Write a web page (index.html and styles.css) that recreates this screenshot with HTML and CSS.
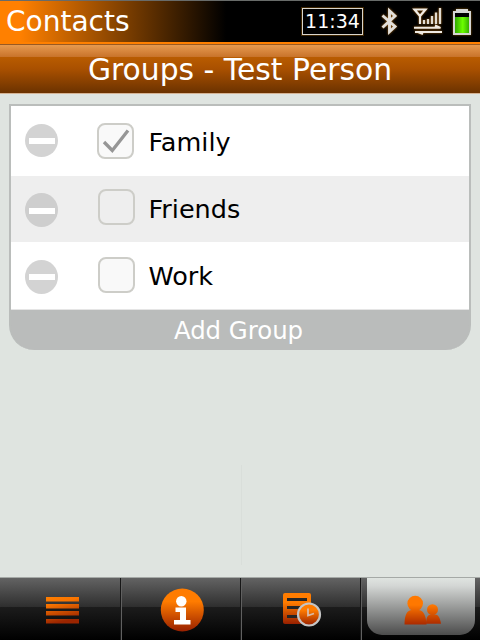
FILE: index.html
```html
<!DOCTYPE html>
<html lang="en">
<head>
<meta charset="utf-8">
<title>Contacts</title>
<link rel="stylesheet" href="styles.css">
</head>
<body>
<svg class="defs" width="0" height="0" aria-hidden="true">
  <defs>
    <linearGradient id="orange" x1="0" y1="0" x2="0" y2="1"><stop offset="0.3" stop-color="#ff7c00"/><stop offset="1" stop-color="#982000"/></linearGradient>
    <linearGradient id="people" gradientUnits="userSpaceOnUse" x1="0" y1="10" x2="0" y2="30"><stop offset="0" stop-color="#ff7800"/><stop offset="1" stop-color="#a82800"/></linearGradient>
    <linearGradient id="bars" gradientUnits="userSpaceOnUse" x1="0" y1="5" x2="6" y2="32"><stop offset="0" stop-color="#ff7e00"/><stop offset="0.3" stop-color="#f87400"/><stop offset="1" stop-color="#9b2500"/></linearGradient>
    <linearGradient id="battery" x1="0" x2="1"><stop offset="0" stop-color="#32a800"/><stop offset="0.55" stop-color="#6cff00"/><stop offset="1" stop-color="#36b000"/></linearGradient>
  </defs>
</svg>
<header class="status">
  <h1 class="app-name">Contacts</h1>
  <div class="clock">11:34</div>
  <svg class="bluetooth" width="20" height="30" viewBox="0 0 20 30"><path d="M2.500 8.500 L15 19.500 L9.500 24.700 V3.800 L15 9 L2.500 20.500" fill="none" stroke="#e2dfda" stroke-width="2.900"/></svg>
  <svg class="signal" width="32" height="30" viewBox="0 0 32 30"><path d="M2.500 3.500 H13.500 L8 10 Z M8 9 V18" fill="none" stroke="#f0ece6" stroke-width="2.200"/><path d="M12 18V14M16 18V13M20 18V10M24 18V6.500M28 18V2" stroke="#e2dcd2" stroke-width="2.300"/><path d="M2 21.800H28.500L23 19.500M30 26H3M6 26L11 28" fill="none" stroke="#eee9e2" stroke-width="2"/></svg>
  <svg class="battery" width="20" height="28" viewBox="0 0 20 28"><path d="M4 1H16V3H19V27H1V3H4Z" fill="#d5d5d3"/><path d="M3 5H17V25H3Z" fill="#000"/><path d="M3 9H17V25H3Z" fill="url(#battery)"/></svg>
</header>
<div class="title">Groups - Test Person</div>
<main class="content">
  <section class="list">
    <div class="row">
      <span class="remove"></span>
      <span class="check checked"><svg width="32" height="32" viewBox="0 0 32 32"><path d="M5 17 L13.300 25.500 L29 5.500" fill="none" stroke="#969696" stroke-width="3.300"/></svg></span>
      <span class="label">Family</span>
    </div>
    <div class="row alt">
      <span class="remove"></span>
      <span class="check"></span>
      <span class="label">Friends</span>
    </div>
    <div class="row last">
      <span class="remove"></span>
      <span class="check"></span>
      <span class="label">Work</span>
    </div>
    <div class="add">Add Group</div>
  </section>
  <div class="divider"></div>
</main>
<nav class="tabs">
  <div class="tab tab-menu">
    <svg width="34" height="36" viewBox="0 0 34 36"><path d="M0 5H33V9.500H0ZM0 12H33V16.500H0ZM0 19H33V23.500H0ZM0 27H33V31.500H0Z" fill="url(#bars)"/></svg>
  </div>
  <div class="tab">
    <svg width="44" height="44" viewBox="0 0 44 44"><circle cx="22.300" cy="22" r="21.500" fill="url(#orange)"/><circle cx="21.300" cy="13.300" r="5.200" fill="#fff"/><path d="M15.500 19.500H26V32H30.500V36.500H14V32H20V24H15.500Z" fill="#fff"/></svg>
  </div>
  <div class="tab">
    <svg width="40" height="36" viewBox="0 0 40 36"><path d="M3 1H27Q29 1 29 3V32H3Q1 32 1 30V3Q1 1 3 1Z" fill="url(#orange)"/><path d="M5 6H25V9H5ZM5 14H21V17H5ZM5 23H16V26H5Z" fill="#252525"/><circle cx="27" cy="22.500" r="11" fill="url(#orange)" stroke="#c5c5c5" stroke-width="2.200"/><path d="M26 16.500V23.500L32 21.500" fill="none" stroke="#d8bca9" stroke-width="1.800"/></svg>
  </div>
  <div class="tab tab-active">
    <div class="active-pill">
      <svg width="38" height="30" viewBox="0 0 38 30"><g fill="url(#people)"><circle cx="11.200" cy="8.500" r="7.800"/><path d="M0.500 29.500C0.500 20 3 15 8 15H14.500C19 15 22 20 22.500 29.500Z"/><circle cx="28.500" cy="14.700" r="5.500"/><path d="M22 28.700C22 22.500 24 19.500 27 19.500H31C34 19.500 36 22.500 37 28.700Z"/></g></svg>
    </div>
  </div>
</nav>
</body>
</html>
```

FILE: styles.css
```css
* { box-sizing: border-box; }

body {
  margin: 0;
  width: 480px;
  height: 640px;
  overflow: hidden;
  display: flex;
  flex-direction: column;
  background: #dfe4e0;
  font-family: "DejaVu Sans", sans-serif;
  color: #000;
}

.defs { position: absolute; }

svg { display: block; }

.status {
  flex: none;
  height: 44px;
  display: flex;
  align-items: flex-start;
  padding: 6px 8px 0 6px;
  border-top: 1px solid #686b69;
  border-bottom: 2px solid #ff8000;
  background: linear-gradient(90deg, #ff8000 0, #ff8000 20px, #000 226px);
}

.app-name {
  margin: -1px auto 0 0;
  font-size: 28px;
  font-weight: 400;
  line-height: 32px;
  color: #fff;
}

.clock {
  width: 61px;
  height: 27px;
  margin-top: 1px;
  border: 1px solid #d8d4cc;
  outline: 1px solid #3c2400;
  font-size: 19px;
  line-height: 25px;
  text-align: center;
  color: #fff;
}

.bluetooth { margin: 0 0 0 17px; filter: drop-shadow(0 0 1px #a06010); }

.signal { margin: -1px 2px 0 12px; filter: drop-shadow(0 0 1px #905000); }

.battery { margin: 1px 0 0 6px; filter: drop-shadow(0 0 1px #805000); }

.title {
  flex: none;
  height: 50px;
  border-top: 1px solid #9a5a22;
  border-bottom: 1px solid #d5b394;
  background: linear-gradient(#e69a50, #c8732a 12px, #b95c00 12px, #a95000 24px, #6b3200);
  font-size: 29.800px;
  line-height: 50px;
  text-align: center;
  color: #fff;
}

.content {
  flex: 1;
  padding: 10px 9px 0;
}

.list {
  height: 246px;
  border: 2px solid #babdbb;
  border-bottom: 0;
  border-radius: 0 0 25px 25px;
  background: #babcbb;
}

.row {
  display: flex;
  height: 70px;
  padding: 0 14px;
  background: #fff;
}

.alt { height: 66px; background: #eee; }

.last { height: 68px; border-bottom: 1px solid #e5e5e5; }

.remove {
  width: 33px;
  height: 33px;
  margin-top: 18px;
  border-radius: 50%;
  background: linear-gradient(#fff, #fff) 4px 14px / 26px 6px no-repeat #d3d3d3;
}

.alt .remove {
  height: 34px;
  margin-top: 17px;
  background-color: #cecece;
  background-position: 4px 15px;
}

.check {
  width: 37px;
  height: 36px;
  margin: 17px 0 0 40px;
  border: 2px solid #cdcdc8;
  border-radius: 8px;
  background: #f9f9f9;
}

.checked { margin: 17px 1px 0 39px; }

.alt .check { margin-top: 13px; background: #eee; }

.last .check { margin-top: 15px; }

.label {
  margin: 21px 0 0 13.500px;
  font-size: 25.500px;
  line-height: 30px;
}

.alt .label { margin-top: 18px; }

.last .label { margin-top: 19px; }

.last .remove { height: 34px; margin-top: 18px; }

.add {
  height: 40px;
  font-size: 24.400px;
  line-height: 41px;
  padding-right: 3px;
  text-align: center;
  color: #fff;
}

.divider {
  width: 1px;
  height: 100px;
  margin: 115px auto 0 232px;
  background: #d9deda;
}

.tabs {
  flex: none;
  display: grid;
  grid-template-columns: 122px 120px 120px 118px;
  height: 63px;
  border-top: 1px solid #a5a9a6;
  background: linear-gradient(#636363, #2e2e2e 29px, #1c1c1c 29px, #000);
}

.tab {
  display: flex;
  justify-content: center;
  padding-top: 10px;
  border-right: 1px solid #606060;
  box-shadow: inset -1px 0 #171717;
}

.tab-menu { padding: 14px 0 0 4px; }

.tab:nth-child(3) { padding-top: 14px; }

.tab-active { padding: 0 5px 0 5px; border: 0; box-shadow: none; }

.active-pill {
  display: flex;
  justify-content: center;
  width: 108px;
  height: 57px;
  padding: 17px 0 0 3px;
  border-radius: 0 0 15px 15px;
  background: linear-gradient(#dfe4e0, #d3d6d4 8px, #4c4c4c);
}
```
